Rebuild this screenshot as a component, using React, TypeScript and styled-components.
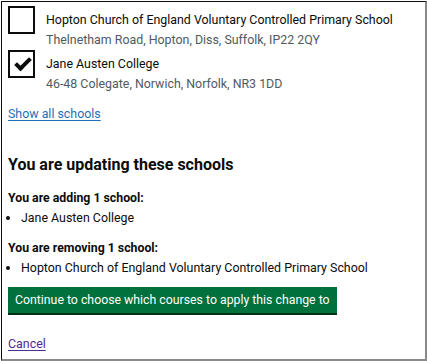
import React from "react";
import styled, { createGlobalStyle } from "styled-components";

const GlobalStyle = createGlobalStyle`
  body {
    margin: 0;
    background: #ffffff;
    font-family: Roboto, "Noto Sans", Arial, sans-serif;
    color: #0b0c0c;
  }
`;

const schools = [
  {
    name: "Hopton Church of England Voluntary Controlled Primary School",
    address: "Thelnetham Road, Hopton, Diss, Suffolk, IP22 2QY",
    checked: false,
  },
  {
    name: "Jane Austen College",
    address: "46-48 Colegate, Norwich, Norfolk, NR3 1DD",
    checked: true,
  },
];

export default function App() {
  return (
    <>
      <GlobalStyle />
      <Frame>
        <Checkboxes>
          {schools.map((s) => (
            <Item key={s.name}>
              <Box $checked={s.checked} />
              <ItemText>
                <Label>{s.name}</Label>
                <Hint>{s.address}</Hint>
              </ItemText>
            </Item>
          ))}
        </Checkboxes>
        <Link href="#">Show all schools</Link>

        <Heading>You are updating these schools</Heading>

        <SubHeading>You are adding 1 school:</SubHeading>
        <List>
          <li>Jane Austen College</li>
        </List>

        <SubHeading>You are removing 1 school:</SubHeading>
        <List>
          <li>Hopton Church of England Voluntary Controlled Primary School</li>
        </List>

        <Button>Continue to choose which courses to apply this change to</Button>

        <CancelLink href="#">Cancel</CancelLink>
      </Frame>
    </>
  );
}

const Frame = styled.div`
  box-sizing: border-box;
  margin: 1px 0 0 1px;
  width: 426px;
  height: 360px;
  border-top: 1px solid #0b0c0c;
  border-left: 1px solid #0b0c0c;
  border-right: 2px solid #8a8a8a;
  border-bottom: 2px solid #8a8a8a;
  padding: 3px 6px 0;
  overflow: hidden;
`;

const Checkboxes = styled.div`
  display: flex;
  flex-direction: column;
  gap: 1px;
`;

const Item = styled.div`
  display: flex;
  align-items: flex-start;
`;

const Box = styled.span<{ $checked: boolean }>`
  flex: none;
  position: relative;
  box-sizing: border-box;
  width: 27px;
  height: 28px;
  border: 2px solid #0b0c0c;
  margin-top: 1px;

  &::after {
    content: "";
    display: ${(p) => (p.$checked ? "block" : "none")};
    position: absolute;
    left: 5px;
    top: 6px;
    width: 12px;
    height: 5px;
    border-left: 4px solid #0b0c0c;
    border-bottom: 4px solid #0b0c0c;
    transform: rotate(-45deg);
  }
`;

const ItemText = styled.div`
  display: flex;
  flex-direction: column;
  padding-left: 11px;
`;

const Label = styled.span`
  font-size: 12.4px;
  line-height: 17px;
  padding-top: 6px;
`;

const Hint = styled.span`
  font-size: 12.4px;
  line-height: 17px;
  padding-top: 3px;
  color: #505a5f;
`;

const Link = styled.a`
  display: inline-block;
  margin-top: 13px;
  font-size: 12.4px;
  line-height: 17px;
  color: #1d70b8;
  text-decoration: underline;
  text-underline-offset: 2px;
`;

const Heading = styled.h2`
  margin: 32px 0 0;
  font-size: 16px;
  line-height: 22px;
  font-weight: 700;
`;

const SubHeading = styled.h3`
  margin: 14px 0 0;
  font-size: 12.3px;
  line-height: 17px;
  font-weight: 700;
`;

const List = styled.ul`
  margin: 2px 0 0;
  padding-left: 13px;
  font-size: 12.4px;
  line-height: 17px;
`;

const Button = styled.button`
  display: block;
  margin-top: 11px;
  padding: 5px 7px 4px;
  border: 0;
  border-radius: 0;
  background: #00703c;
  box-shadow: 0 2px 0 #002d18;
  color: #ffffff;
  font-family: inherit;
  font-size: 12.3px;
  line-height: 17px;
  cursor: pointer;
`;

const CancelLink = styled.a`
  display: inline-block;
  margin-top: 22px;
  font-size: 12.4px;
  line-height: 17px;
  color: #4c2c92;
  text-decoration: underline;
  text-underline-offset: 2px;
`;
